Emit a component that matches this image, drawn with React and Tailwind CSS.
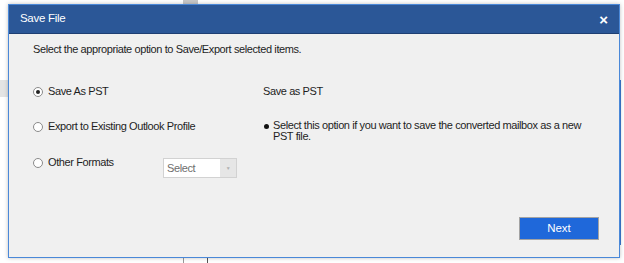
import React, { useState } from 'react';

const Radio = ({ checked, label, onClick }) => (
  <button type="button" onClick={onClick} className="flex items-center gap-[5px] text-left h-[13px]">
    <span className="w-[10px] h-[10px] rounded-full border border-[#8a8a8a] bg-white flex items-center justify-center">
      {checked && <span className="w-[4px] h-[4px] rounded-full bg-[#222]" />}
    </span>
    <span>{label}</span>
  </button>
);

const App = () => {
  const [choice, setChoice] = useState('pst');

  return (
    <div className="relative w-[624px] h-[263px] bg-white overflow-hidden pt-[4px] pl-[8px]" style={{ fontFamily: '"Liberation Sans", Arial, sans-serif' }}>
      {/* fragments of the window behind */}
      <div className="absolute left-[183px] top-0 w-[15px] h-[4px] bg-[#c8c8c8]" />
      <div className="absolute left-0 top-[80px] w-[8px] h-[17px] bg-[#e4e4e4]" />
      <div className="absolute left-[620px] top-[80px] w-[1px] h-[165px] bg-[#3b7bd4]" />
      <div className="absolute left-[183px] top-[258px] w-[1px] h-[5px] bg-[#999]" />
      <div className="absolute left-[207px] top-[258px] w-[1px] h-[5px] bg-[#555]" />

      {/* Dialog */}
      <div className="relative w-[612px] h-[254px] flex flex-col bg-[#f0f0f0] border border-[#4a88d8] shadow-[0_0_4px_rgba(0,0,0,0.25)]">
        <div className="h-[29px] bg-[#2b5797] flex items-center justify-between pl-[11px] pr-[11px] text-white border-b border-[#1e3f73]">
          <span className="text-[11.5px] tracking-[-0.3px]">Save File</span>
          <span className="text-[15px] font-bold leading-none">×</span>
        </div>

        <div className="flex-1 flex flex-col text-[11px] tracking-[-0.4px] text-[#1e1e1e] pl-[24px]">
          <p className="mt-[9px] h-[13px] leading-[13px]">Select the appropriate option to Save/Export selected items.</p>

          <div className="flex mt-[29px] leading-[13px]">
            <div className="w-[230px] flex flex-col">
              <Radio checked={choice === 'pst'} label="Save As PST" onClick={() => setChoice('pst')} />
              <div className="mt-[22px]">
                <Radio checked={choice === 'outlook'} label="Export to Existing Outlook Profile" onClick={() => setChoice('outlook')} />
              </div>
              <div className="mt-[23px] flex items-start">
                <div className="w-[130px]">
                  <Radio checked={choice === 'other'} label="Other Formats" onClick={() => setChoice('other')} />
                </div>
                <div className="mt-[2px] w-[74px] h-[20px] bg-white border border-[#d2d2d2] flex items-center">
                  <span className="flex-1 pl-[3px] text-[#6e6e6e]">Select</span>
                  <span className="w-[16px] h-full bg-[#e6e6e6] flex items-center justify-center text-[5px] text-[#b0b0b0]">▼</span>
                </div>
              </div>
            </div>

            <div className="flex-1 flex flex-col">
              <p>Save as PST</p>
              <div className="flex mt-[22px]">
                <span className="w-[10px] pt-[4px] pl-[1px]"><span className="block w-[5px] h-[5px] rounded-full bg-[#111]" /></span>
                <p className="w-[316px] leading-[11px]">Select this option if you want to save the converted mailbox as a new PST file.</p>
              </div>
            </div>
          </div>

          <div className="mt-auto mb-[17px] flex justify-end pr-[20px]">
            <button type="button" className="w-[80px] h-[23px] bg-[#1f68da] border border-[#a3a3a3] text-white text-[11.5px] tracking-normal">Next</button>
          </div>
        </div>
      </div>
    </div>
  );
};

export default App;
